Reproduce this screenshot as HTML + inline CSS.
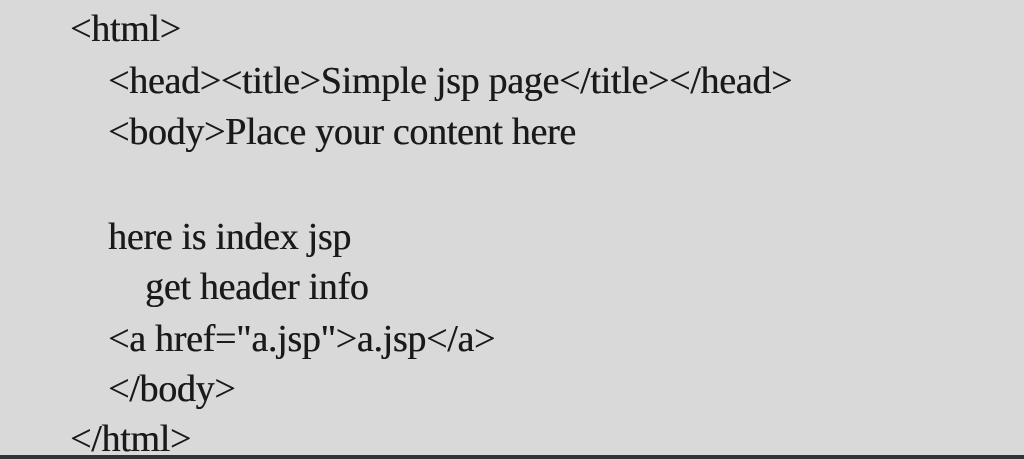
<!DOCTYPE html>
<html><head><style>
html,body{margin:0;padding:0}
body{width:1024px;height:459px;background:#d9d9d9;position:relative;overflow:hidden;font-family:"Liberation Serif",serif;font-size:38px;color:#1a1a1a;letter-spacing:-0.3px;text-shadow:0.4px 0 0 #1a1a1a}
.l{position:absolute;white-space:pre;line-height:1}
.bar{position:absolute;left:0;top:455px;width:1024px;height:4px;background:#333}
</style></head><body>
<div class="l" style="left:70px;top:10px">&lt;html&gt;</div>
<div class="l" style="left:108px;top:62px">&lt;head&gt;&lt;title&gt;Simple jsp page&lt;/title&gt;&lt;/head&gt;</div>
<div class="l" style="left:108px;top:113px">&lt;body&gt;Place your content here</div>
<div class="l" style="left:108px;top:218px">here is index jsp</div>
<div class="l" style="left:145px;top:268px">get header info</div>
<div class="l" style="left:108px;top:320px">&lt;a href="a.jsp"&gt;a.jsp&lt;/a&gt;</div>
<div class="l" style="left:108px;top:370px">&lt;/body&gt;</div>
<div class="l" style="left:70px;top:420px">&lt;/html&gt;</div>
<div class="bar"></div>
</body></html>
